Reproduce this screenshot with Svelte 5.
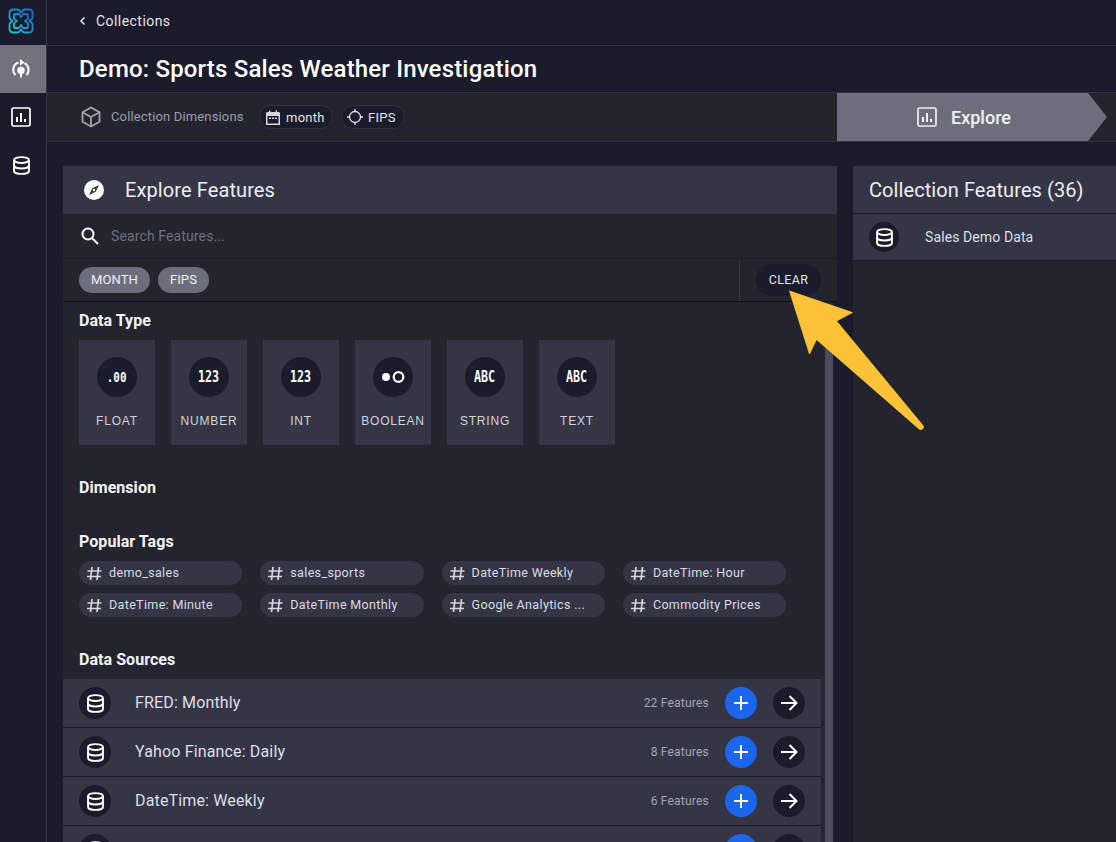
<script>
  const types = [
    { g: '.00', l: 'FLOAT', small: true },
    { g: '123', l: 'NUMBER' },
    { g: '123', l: 'INT' },
    { g: '', l: 'BOOLEAN' },
    { g: 'ABC', l: 'STRING' },
    { g: 'ABC', l: 'TEXT' }
  ];
  const tags = ['demo_sales', 'sales_sports', 'DateTime Weekly', 'DateTime: Hour', 'DateTime: Minute', 'DateTime Monthly', 'Google Analytics ...', 'Commodity Prices'];
  const sources = [
    { n: 'FRED: Monthly', c: '22 Features' },
    { n: 'Yahoo Finance: Daily', c: '8 Features' },
    { n: 'DateTime: Weekly', c: '6 Features' },
    { n: '', c: '' }
  ];
</script>

{#snippet db(size)}
  <svg width={size} height={size} viewBox="0 0 24 24" fill="none" stroke="currentColor" stroke-width="2.200">
    <ellipse cx="12" cy="5.800" rx="8.500" ry="3.400" />
    <path d="M3.500 5.800v12.400c0 1.900 3.800 3.400 8.500 3.400s8.500-1.500 8.500-3.400V5.800" />
    <path d="M3.500 12c0 1.900 3.800 3.400 8.500 3.400s8.500-1.500 8.500-3.400" />
  </svg>
{/snippet}

{#snippet chart(size)}
  <svg width={size} height={size} viewBox="0 0 20 20" fill="none">
    <rect x="1" y="1" width="18" height="18" rx="1.500" stroke="currentColor" stroke-width="1.700" />
    <path d="M6 10v5M10 6v9M14 12v3" stroke="currentColor" stroke-width="2" />
  </svg>
{/snippet}

<div class="app">
  <nav class="rail">
    <div class="logo">
      <svg width="26" height="26" viewBox="0 0 26 26" fill="none">
        <defs>
          <linearGradient id="lg" x1="0" y1="1" x2="1" y2="0">
            <stop offset="0" stop-color="#1fc4c9" />
            <stop offset="1" stop-color="#1c66d0" />
          </linearGradient>
        </defs>
        <path d="M5 1.500h4.500c2.500 0 2.500 3 3.500 3s1-3 3.500-3H21c2 0 3.500 1.500 3.500 3.500v4.500c0 2.500-3 2.500-3 3.500s3 1 3 3.500V21c0 2-1.500 3.500-3.500 3.500h-4.500c-2.500 0-2.500-3-3.500-3s-1 3-3.500 3H5c-2 0-3.500-1.500-3.500-3.500v-4.500c0-2.500 3-2.500 3-3.500s-3-1-3-3.500V5c0-2 1.500-3.500 3.500-3.500z" stroke="url(#lg)" stroke-width="1.800" />
        <path d="M7 6h3.500c1.500 0 1.500 3 2.500 3s1-3 2.500-3H19c.6 0 1 .4 1 1v3.500c0 1.500-3 1.500-3 2.500s3 1 3 2.500V19c0 .6-.4 1-1 1h-3.500c-1.500 0-1.500-3-2.500-3s-1 3-2.500 3H7c-.6 0-1-.4-1-1v-3.500c0-1.500 3-1.500 3-2.500s-3-1-3-2.500V7c0-.6.4-1 1-1z" stroke="url(#lg)" stroke-width="1.800" />
      </svg>
    </div>
    <div class="rail-btn active">
      <svg width="20" height="22" viewBox="0 0 20 22" fill="none">
        <path d="M4.500 17a7.500 7.500 0 0 1 3-12.500" stroke="#fff" stroke-width="2" />
        <path d="M15.500 17a7.500 7.500 0 0 0-2-11.800" stroke="#fff" stroke-width="2" />
        <path d="M9 1l4.500 3.500L9 7.500z" fill="#fff" />
        <circle cx="10" cy="12.500" r="3.700" fill="#fff" />
        <rect x="9" y="15" width="2" height="4.500" fill="#fff" />
      </svg>
    </div>
    <div class="rail-btn">{@render chart(20)}</div>
    <div class="rail-btn">{@render db(21)}</div>
  </nav>

  <main class="main">
    <div class="crumb">
      <svg width="7" height="10" viewBox="0 0 7 10" fill="none"><path d="M5.500 1.500L2 5l3.500 3.500" stroke="#e8e8ee" stroke-width="1.500" /></svg>
      <span>Collections</span>
    </div>
    <h1 class="title">Demo: Sports Sales Weather Investigation</h1>
    <div class="dims">
      <div class="dims-left">
        <svg class="cube" width="20" height="22" viewBox="0 0 20 22" fill="none" stroke="#a3a4ad" stroke-width="1.800">
          <path d="M10 1.500l8.500 4.800v9.400L10 20.500l-8.500-4.800V6.300z" />
          <path d="M1.500 6.300L10 11l8.500-4.700M10 11v9.500" />
        </svg>
        <span class="dims-label">Collection Dimensions</span>
        <span class="chip month">
          <svg width="14" height="15" viewBox="0 0 14 15"><path d="M0 3.500c0-.8.6-1.500 1.500-1.500H3V.5h1.500V2h5V.5H11V2h1.500c.8 0 1.500.7 1.500 1.500V15H0zM1.500 6v7.500h11V6z" fill="#d5d5dc" /><rect x="3" y="7.500" width="2" height="1.500" fill="#d5d5dc" /><rect x="6" y="7.500" width="2" height="1.500" fill="#d5d5dc" /><rect x="9" y="7.500" width="2" height="1.500" fill="#d5d5dc" /></svg>
          month
        </span>
        <span class="chip fips">
          <svg width="16" height="16" viewBox="0 0 16 16" fill="none" stroke="#e5e5ea" stroke-width="1.300"><circle cx="8" cy="8" r="5.500" /><path d="M8 0v2.500M8 13.500V16M0 8h2.500M13.500 8H16" /></svg>
          FIPS
        </span>
      </div>
      <div class="explore">
        {@render chart(20)}
        <span>Explore</span>
      </div>
    </div>

    <div class="work">
      <section class="left">
        <header class="panel-head">
          <svg width="20" height="20" viewBox="0 0 20 20"><circle cx="10" cy="10" r="10" fill="#fff" /><path d="M15 5l-3.300 6.700L5 15l3.300-6.700z" fill="#343646" /><circle cx="10" cy="10" r="1.200" fill="#fff" /></svg>
          <span>Explore Features</span>
        </header>
        <div class="search">
          <svg width="18" height="18" viewBox="0 0 18 18" fill="none" stroke="#fff" stroke-width="2"><circle cx="7" cy="7" r="5.500" /><path d="M11 11l6 6" /></svg>
          <span>Search Features...</span>
        </div>
        <div class="filters">
          <div class="filter-pills">
            <span class="fpill">MONTH</span>
            <span class="fpill">FIPS</span>
          </div>
          <div class="clear-cell"><span class="clear">CLEAR</span></div>
        </div>
        <div class="scroll">
          <div class="scroll-body">
            <h2>Data Type</h2>
            <div class="tiles">
              {#each types as t}
                <div class="tile">
                  <div class="glyph">
                    {#if t.g}
                      <span class={t.small ? 'gtext small' : 'gtext'}>{t.g}</span>
                    {:else}
                      <svg width="24" height="12" viewBox="0 0 24 12" fill="none"><circle cx="5" cy="6" r="4" fill="#fff" /><circle cx="17.500" cy="6" r="4.800" stroke="#fff" stroke-width="2.200" /></svg>
                    {/if}
                  </div>
                  <div class="tile-label">{t.l}</div>
                </div>
              {/each}
            </div>
            <h2 class="h-dim">Dimension</h2>
            <h2 class="h-tags">Popular Tags</h2>
            <div class="tags">
              {#each tags as t}
                <div class="tag">
                  <svg width="15" height="15" viewBox="0 0 15 15" fill="none" stroke="#d6d6dc" stroke-width="1.700"><path d="M5 1L3.500 14M11.500 1L10 14M.5 5h14M0 10.500h14" /></svg>
                  <span>{t}</span>
                </div>
              {/each}
            </div>
            <h2 class="h-src">Data Sources</h2>
            <div class="rows">
              {#each sources as s}
                <div class="row">
                  <span class="dot">{@render db(21)}</span>
                  <span class="row-name">{s.n}</span>
                  <span class="row-count">{s.c}</span>
                  <span class="dot add">
                    <svg width="16" height="16" viewBox="0 0 16 16" stroke="#fff" stroke-width="2"><path d="M8 1v14M1 8h14" /></svg>
                  </span>
                  <span class="dot go">
                    <svg width="18" height="16" viewBox="0 0 18 16" fill="none" stroke="#fff" stroke-width="2"><path d="M1 8h15M9.500 1l7 7-7 7" /></svg>
                  </span>
                </div>
              {/each}
            </div>
          </div>
          <div class="thumb"></div>
        </div>
      </section>
      <aside class="right">
        <header class="right-head">Collection Features (36)</header>
        <div class="right-row">
          <span class="dot small-dot">{@render db(21)}</span>
          <span>Sales Demo Data</span>
        </div>
      </aside>
    </div>
  </main>

  <svg class="pointer" width="140" height="145" viewBox="785 288 140 145">
    <path d="M789.500 291L852.500 312.500L836.500 321L923 425.500Q924.500 428.500 921.500 429.500Q920 430 918.500 428.500L816.500 339.500L809.500 354Z" fill="#fdc338" stroke="#fdc338" stroke-width="0.800" stroke-linejoin="round" />
  </svg>
</div>

<style>
  :global(body) {
    margin: 0;
    background: #1a1b2b;
  }
  .app {
    position: relative;
    display: flex;
    width: 1116px;
    height: 842px;
    overflow: hidden;
    background: #1a1b2b;
    color: #fff;
    font-family: Roboto, "Liberation Sans", sans-serif;
  }
  .rail {
    width: 46px;
    flex: none;
    border-right: 1px solid #32343f;
    display: flex;
    flex-direction: column;
  }
  .logo {
    height: 45px;
    padding: 0 4px 3px 0;
    box-sizing: border-box;
    display: flex;
    align-items: center;
    justify-content: center;
  }
  .rail-btn {
    height: 48px;
    padding-right: 4px;
    display: flex;
    align-items: center;
    justify-content: center;
    color: #fff;
  }
  .rail-btn.active {
    background: #71727d;
  }
  .main {
    flex: 1;
    min-width: 0;
    display: flex;
    flex-direction: column;
  }
  .crumb {
    box-sizing: border-box;
    border-bottom: 1px solid #32343f;
    height: 46px;
    padding: 0 0 4px 32px;
    display: flex;
    align-items: center;
    gap: 10px;
    font-size: 14px;
    letter-spacing: 0.45px;
    color: #e4e4ea;
  }
  .title {
    margin: 0;
    height: 46px;
    line-height: 46px;
    padding-left: 32px;
    font-size: 24px;
    font-weight: 500;
    letter-spacing: 0.18px;
    border-bottom: 1px solid #32343f;
  }
  .dims {
    height: 48px;
    display: flex;
    background: #24242f;
    border-bottom: 1px solid #32343f;
  }
  .dims-left {
    width: 790px;
    flex: none;
    display: flex;
    align-items: center;
    padding-left: 34px;
    box-sizing: border-box;
  }
  .dims-label {
    margin-left: 10px;
    width: 148px;
    padding-bottom: 1px;
    font-size: 13px;
    letter-spacing: 0.15px;
    color: #9c9da6;
  }
  .chip {
    height: 24px;
    box-sizing: border-box;
    border-radius: 12px;
    background: #1a1b2b;
    border: 1px solid #31323f;
    display: flex;
    align-items: center;
    font-size: 13px;
    letter-spacing: 0.25px;
    color: #e4e4ea;
  }
  .month {
    width: 74px;
    padding-left: 6px;
    gap: 6px;
    margin-right: 8px;
  }
  .fips {
    width: 64px;
    padding-left: 5px;
    gap: 5px;
  }
  .explore {
    width: 270px;
    flex: none;
    background: #6d6e7b;
    clip-path: polygon(0 0, 251px 0, 100% 50%, 251px 100%, 0 100%);
    display: flex;
    align-items: center;
    justify-content: center;
    gap: 14px;
    padding-right: 16px;
    box-sizing: border-box;
    font-size: 18px;
    font-weight: 500;
    color: #f1f1f4;
  }
  .work {
    flex: 1;
    min-height: 0;
    display: flex;
    padding: 24px 0 0 16px;
    gap: 16px;
  }
  .left {
    width: 774px;
    flex: none;
    display: flex;
    flex-direction: column;
    min-height: 0;
  }
  .panel-head {
    height: 48px;
    flex: none;
    background: #343646;
    display: flex;
    align-items: center;
    padding-left: 21px;
    gap: 21px;
    font-size: 20px;
    color: #eeeef2;
    letter-spacing: 0.1px;
  }
  .search {
    height: 44px;
    flex: none;
    background: #24242f;
    border-bottom: 1px solid #191a26;
    display: flex;
    align-items: center;
    padding: 0 0 0 18px;
    gap: 12px;
    font-size: 14px;
    letter-spacing: 0.12px;
    color: #6e6f7c;
  }
  .filters {
    height: 42px;
    flex: none;
    background: #24242f;
    border-bottom: 1px solid #0f1018;
    display: flex;
    justify-content: space-between;
  }
  .filter-pills {
    display: flex;
    align-items: center;
    gap: 8px;
    padding-left: 16px;
  }
  .fpill {
    height: 26px;
    border-radius: 13px;
    background: #6d6e7b;
    padding: 0 12px 1px;
    box-sizing: border-box;
    display: flex;
    align-items: center;
    font-size: 13px;
    letter-spacing: 0.1px;
    color: #eeeef2;
  }
  .clear-cell {
    width: 98px;
    box-sizing: border-box;
    border-left: 1px solid #32343f;
    display: flex;
    align-items: center;
    padding-left: 16px;
  }
  .clear {
    width: 65px;
    height: 32px;
    box-sizing: border-box;
    padding-bottom: 1px;
    border-radius: 16px;
    background: #1a1b2b;
    display: flex;
    align-items: center;
    justify-content: center;
    font-size: 12.500px;
    letter-spacing: 0.35px;
    color: #e4e4ea;
  }
  .scroll {
    position: relative;
    flex: 1;
    min-height: 0;
    width: 770px;
    background: #24242f;
    overflow: hidden;
  }
  .scroll-body {
    width: 758px;
    padding-top: 9px;
  }
  .thumb {
    position: absolute;
    left: 762px;
    top: 30px;
    bottom: 0;
    width: 8px;
    background: #4c4d5b;
  }
  h2 {
    margin: 0;
    padding-left: 16px;
    height: 18px;
    line-height: 20px;
    font-size: 16px;
    font-weight: 700;
    letter-spacing: 0.05px;
    color: #f4f4f6;
  }
  .h-dim { margin-top: 33px; }
  .h-tags { margin-top: 36px; }
  .h-src { margin-top: 33px; }
  .tiles {
    display: flex;
    gap: 16px;
    padding-left: 16px;
    margin-top: 11px;
  }
  .tile {
    width: 76px;
    height: 105px;
    background: #343646;
    display: flex;
    flex-direction: column;
    align-items: center;
    padding-top: 17px;
    box-sizing: border-box;
  }
  .glyph {
    width: 40px;
    height: 40px;
    border-radius: 50%;
    background: #1a1b2b;
    display: flex;
    align-items: center;
    justify-content: center;
    font-family: "DejaVu Sans Mono", monospace;
    font-weight: 700;
    font-size: 15px;
    color: #fff;
  }
  .gtext {
    display: inline-block;
    transform: scaleX(0.78);
  }
  .gtext.small {
    font-size: 14px;
  }
  .tile-label {
    margin-top: 16px;
    font-family: "Liberation Sans", sans-serif;
    font-size: 12px;
    line-height: 16px;
    letter-spacing: 0.8px;
    color: #d2d3da;
  }
  .tags {
    display: grid;
    grid-template-columns: repeat(4, 163.300px);
    gap: 8px 18px;
    padding-left: 16px;
    margin-top: 11px;
  }
  .tag {
    height: 24px;
    box-sizing: border-box;
    border-radius: 12px;
    background: #343646;
    display: flex;
    align-items: center;
    padding: 0 0 1px 8px;
    gap: 7px;
    font-size: 12.500px;
    letter-spacing: 0.35px;
    color: #dcdce2;
  }
  .tag svg {
    margin-top: 1px;
  }
  .rows {
    margin-top: 11px;
  }
  .row {
    height: 48px;
    background: #343646;
    border-bottom: 1px solid #1a1b2b;
    display: flex;
    align-items: center;
    padding: 0 16px;
  }
  .dot {
    width: 32px;
    height: 32px;
    flex: none;
    border-radius: 50%;
    background: #1a1b2b;
    color: #fff;
    display: flex;
    align-items: center;
    justify-content: center;
  }
  .small-dot {
    width: 30px;
    height: 30px;
  }
  .row-name {
    flex: 1;
    margin-left: 24px;
    padding-bottom: 2px;
    font-size: 16px;
    letter-spacing: 0.15px;
    color: #dfdfe6;
  }
  .row-count {
    font-size: 12px;
    letter-spacing: 0.22px;
    color: #a5a6af;
    margin-right: 16px;
  }
  .add {
    background: #1c66ee;
    margin-right: 16px;
  }
  .right {
    flex: 1;
    min-width: 0;
    display: flex;
    flex-direction: column;
    background: #24242f;
  }
  .right-head {
    height: 47px;
    flex: none;
    background: #343646;
    border-bottom: 1px solid #1a1b2b;
    display: flex;
    align-items: center;
    padding-left: 16px;
    font-size: 20px;
    letter-spacing: 0.08px;
    color: #eeeef2;
  }
  .right-row {
    height: 46px;
    flex: none;
    background: #343646;
    border-bottom: 1px solid #1a1b2b;
    display: flex;
    align-items: center;
    padding-left: 16px;
    gap: 26px;
    font-size: 14px;
    letter-spacing: 0.1px;
    color: #dfdfe6;
  }
  .pointer {
    position: absolute;
    left: 785px;
    top: 288px;
    pointer-events: none;
  }
</style>
